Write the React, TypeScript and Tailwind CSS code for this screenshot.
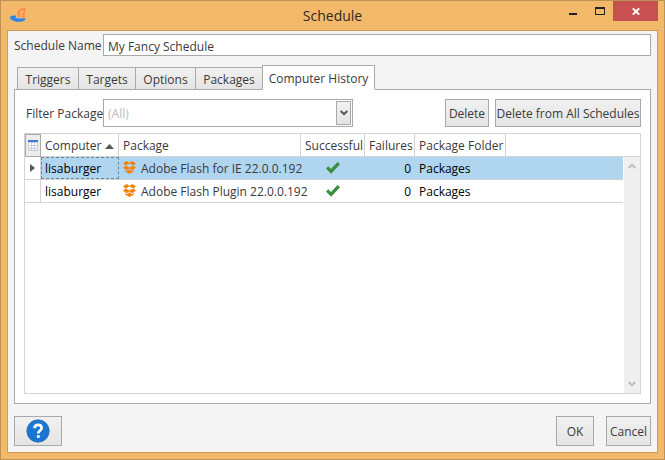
import React, { useState } from 'react';
import clsx from 'clsx';

const tabs = [
  { name: 'Triggers', width: 'w-[61px]' },
  { name: 'Targets', width: 'w-[57px]' },
  { name: 'Options', width: 'w-[60px]' },
  { name: 'Packages', width: 'w-[67px]' },
  { name: 'Computer History', width: 'w-[113px]' },
];

const history = [
  { computer: 'lisaburger', pkg: 'Adobe Flash for IE 22.0.0.192', failures: 0, folder: 'Packages' },
  { computer: 'lisaburger', pkg: 'Adobe Flash Plugin 22.0.0.192', failures: 0, folder: 'Packages' },
];

const buttonStyle = 'border border-[#a9a9a9] bg-linear-to-b from-[#f1f1f1] to-[#e4e4e4] text-center whitespace-nowrap';

const AppLogo = () => (
  <svg className="h-4 w-4" viewBox="0 0 16 16" aria-hidden="true">
    <path d="M0 10.4C0.2 8.6 2.6 8 5.4 8.6L6.4 10.6L12 11.6L15.6 11.2C15.6 13.6 12.6 14.9 9 14.7C4.2 14.5 0 12.8 0 10.4Z" fill="#2e86ea" />
    <path d="M5.4 10C6.6 11.6 9 12 11 11.2L8 9.8Z" fill="#b9c4cb" />
    <path d="M7.4 10C6.6 6.4 7.8 2 11.6 1.2L15.4 0.8C16 3.4 15.4 5 14.8 6.4L14.6 10.2L11.6 11.4L12.2 6.8L10.6 6.2L9.8 11Z" fill="#fb914f" />
    <path d="M10.2 5.4L12.8 3L12.8 6.4Z" fill="#f6c08a" />
  </svg>
);

const PackageIcon = () => (
  <svg className="h-[13px] w-[13px] shrink-0" viewBox="0 0 13 13" fill="#f5820b" aria-hidden="true">
    <path d="M3.8 0L6.5 1.9V2.4L2.7 4.6L0 2.3Z" />
    <path d="M9.2 0L6.5 1.9V2.4L10.3 4.6L13 2.3Z" />
    <path d="M0 6.8L2.6 4.4L6.5 6.6V7.4L3.8 9.3Z" />
    <path d="M13 6.8L10.4 4.4L6.5 6.6V7.4L9.2 9.3Z" />
    <path d="M2 9.1L3.9 10.2L6.5 8.2L9.1 10.2L11 9.1V10.6L6.5 13L2 10.6Z" />
  </svg>
);

const CheckIcon = () => (
  <svg className="mx-auto h-3 w-[14px]" viewBox="0 0 14 12" role="img" aria-label="Yes">
    <path d="M0 6.4L2.2 4.2L5 7L11.6 0L14 2.2L5.1 11.8Z" fill="#388e3c" />
  </svg>
);

const Chevron = ({ up = false }: { up?: boolean }) => (
  <svg className={clsx('h-[6px] w-2', up && 'rotate-180')} viewBox="0 0 8 6" aria-hidden="true">
    <path d="M0.7 1L4 4.2L7.3 1" fill="none" stroke="currentColor" strokeWidth="2" />
  </svg>
);

const TitleBar = () => (
  <header className="grid h-[29px] grid-cols-[1fr_auto_1fr] items-start">
    <div className="pt-[6px] pl-[9px]">
      <AppLogo />
    </div>
    <h1 className="pt-[5px] text-[14px] leading-5 text-[#2d2a26]">Schedule</h1>
    <div className="flex justify-end pr-[6px]">
      <button type="button" aria-label="Minimize" className="flex h-5 w-[28px] items-center justify-center">
        <svg className="h-[10px] w-[10px]" viewBox="0 0 10 10">
          <path d="M1 7H9V9H1Z" fill="#222" />
        </svg>
      </button>
      <button type="button" aria-label="Maximize" className="flex h-5 w-[26px] items-center justify-center">
        <svg className="h-2 w-[10px]" viewBox="0 0 10 8" shapeRendering="crispEdges">
          <path d="M0 0H10V8H0ZM1 2V7H9V2Z" fill="#222" fillRule="evenodd" />
        </svg>
      </button>
      <button type="button" aria-label="Close" className="flex h-5 w-[45px] items-center justify-center bg-[#c75050]">
        <svg className="h-[7px] w-2" viewBox="0 0 8 7">
          <path d="M0.8 0.4L7.2 6.6M7.2 0.4L0.8 6.6" stroke="#fff" strokeWidth="2" />
        </svg>
      </button>
    </div>
  </header>
);

const HistoryTable = () => {
  const [selected, setSelected] = useState(0);
  const headCell = 'border-r border-b border-[#d3d3d3] px-1 pt-[2px] pb-0 text-left font-normal';

  return (
    <div className="relative flex-1 border border-[#d3d3d3] bg-white">
      <table className="w-full table-fixed border-separate border-spacing-0 whitespace-nowrap">
        <colgroup>
          <col className="w-4" />
          <col className="w-[78px]" />
          <col className="w-[182px]" />
          <col className="w-16" />
          <col className="w-[50px]" />
          <col className="w-[91px]" />
          <col />
        </colgroup>
        <thead>
          <tr className="h-[23px]">
            <th className="border border-[#a9a9a9] bg-[#ececec] p-0">
              <button type="button" aria-label="Choose columns" className="flex w-full justify-center">
                <svg className="h-[11px] w-[10px]" viewBox="0 0 10 11" shapeRendering="crispEdges">
                  <path d="M0 0H10V11H0Z" fill="#c6cfda" />
                  <path d="M0 0H10V2H0Z" fill="#3f7fcf" />
                  <path d="M1 3H3V5H1ZM4 3H6V5H4ZM7 3H9V5H7ZM1 6H3V8H1ZM4 6H6V8H4ZM7 6H9V8H7ZM1 9H3V10H1ZM4 9H6V10H4ZM7 9H9V10H7Z" fill="#fff" />
                </svg>
              </button>
            </th>
            <th className={headCell} aria-sort="ascending">
              <span className="flex items-center justify-between">
                Computer
                <svg className="h-[5px] w-[9px]" viewBox="0 0 9 5">
                  <path d="M4.5 0L9 5H0Z" fill="#555" />
                </svg>
              </span>
            </th>
            <th className={headCell}>Package</th>
            <th className={headCell}>Successful</th>
            <th className={headCell}>Failures</th>
            <th className={headCell}>Package Folder</th>
            <td className="border-b border-[#d3d3d3]" />
          </tr>
        </thead>
        <tbody>
          {history.map((row, i) => {
            const cell = clsx('border-b border-[#d3d3d3] p-0', i === selected && 'bg-[#b0d5ef]');
            return (
              <tr key={row.pkg} className="h-[23px]" onClick={() => setSelected(i)}>
                <td className="border-r border-b border-[#d3d3d3] p-0">
                  {i === selected && (
                    <svg className="mx-auto h-2 w-[5px]" viewBox="0 0 5 8">
                      <path d="M0 0L5 4L0 8Z" fill="#555" />
                    </svg>
                  )}
                </td>
                <td className={cell}>
                  <div className={clsx('h-[22px] border border-dashed px-[3px] pt-px leading-5 text-black', i === selected ? 'border-[#6f8798]' : 'border-transparent')}>
                    {row.computer}
                  </div>
                </td>
                <td className={cell}>
                  <div className="flex h-[22px] gap-[5px] pt-1 pl-1">
                    <PackageIcon />
                    {row.pkg}
                  </div>
                </td>
                <td className={cell}><CheckIcon /></td>
                <td className={clsx(cell, 'text-black')}>
                  <div className="h-[22px] pt-1 pr-1 text-right">{row.failures}</div>
                </td>
                <td className={clsx(cell, 'text-black')}>
                  <div className="h-[22px] pt-1 pl-1">{row.folder}</div>
                </td>
                <td className={cell} />
              </tr>
            );
          })}
        </tbody>
      </table>
      <div className="absolute top-[23px] right-0 bottom-0 flex w-[17px] flex-col items-center justify-between border-l border-white bg-[#efefef] py-[6px] text-[#bdbdbd]">
        <Chevron up />
        <Chevron />
      </div>
    </div>
  );
};

const App = () => {
  const [name, setName] = useState('My Fancy Schedule');
  const [activeTab, setActiveTab] = useState('Computer History');

  return (
    <div className="flex min-h-screen flex-col border border-[#bd9254] bg-[#f3b96b] px-[6px] pb-[6px] font-['Open_Sans','Noto_Sans',sans-serif] text-[12px] leading-4 text-[#3a3a3a]">
      <div className="-mx-[6px]">
        <TitleBar />
      </div>

      <main className="flex flex-1 flex-col border border-[#cf9c58] bg-[#f4f4f4] px-[6px] pt-[3px] pb-[6px]">
        <div className="flex items-center">
          <label htmlFor="schedule-name" className="w-[89px] pt-[2px] whitespace-nowrap">Schedule Name</label>
          <input
            id="schedule-name"
            type="text"
            value={name}
            onChange={(e) => setName(e.target.value)}
            className="h-[22px] min-w-0 flex-1 border border-[#a9a9a9] bg-white px-1 pt-[2px] outline-none"
          />
        </div>

        <div role="tablist" className="relative z-10 mt-[9px] ml-[3px] flex h-[25px] items-end">
          {tabs.map((tab) => (
            <button
              key={tab.name}
              type="button"
              role="tab"
              aria-selected={tab.name === activeTab}
              onClick={() => setActiveTab(tab.name)}
              className={clsx(
                'border border-[#a9a9a9] pt-[2px] text-center whitespace-nowrap',
                tab.width,
                tab.name === activeTab
                  ? 'h-[25px] border-b-white bg-white'
                  : 'h-[23px] border-r-0 bg-linear-to-b from-[#f1f1f1] to-[#e4e4e4]'
              )}
            >
              {tab.name}
            </button>
          ))}
        </div>

        <section role="tabpanel" aria-label={activeTab} className="-mt-px flex flex-1 flex-col border border-[#a9a9a9] bg-white p-[9px]">
          <div className="mb-[6px] flex items-center">
            <label htmlFor="filter-package" className="w-[79px] pt-[2px] pl-[2px] whitespace-nowrap">Filter Package</label>
            <div className="relative w-[250px]">
              <select
                id="filter-package"
                className="block h-7 w-full appearance-none border border-[#a9a9a9] bg-white px-1 pt-[2px] text-[#bdbdbd] outline-none"
              >
                <option>(All)</option>
              </select>
              <span className="pointer-events-none absolute top-[2px] right-[2px] bottom-[2px] flex w-[15px] items-center justify-center border border-[#a9a9a9] bg-linear-to-b from-[#f1f1f1] to-[#e4e4e4] text-[#555]">
                <Chevron />
              </span>
            </div>
            <button type="button" className={clsx(buttonStyle, 'ml-auto h-7 w-11 pt-[2px]')}>Delete</button>
            <button type="button" className={clsx(buttonStyle, 'ml-[6px] h-7 w-[146px] pt-[2px]')}>Delete from All Schedules</button>
          </div>
          <HistoryTable />
        </section>

        <footer className="mt-3 flex">
          <button type="button" aria-label="Help" className={clsx(buttonStyle, 'flex h-[30px] w-12 items-center justify-center')}>
            <svg className="h-6 w-6" viewBox="0 0 24 24">
              <circle cx="12" cy="12" r="11.2" fill="#1976d2" stroke="#2f6fb5" strokeWidth="0.8" />
              <path d="M8.6 9.2C8.6 7 10 5.9 12.1 5.9C14.2 5.9 15.6 7.1 15.6 8.9C15.6 11.4 12.3 11.7 12.3 14.6" fill="none" stroke="#fff" strokeWidth="2.7" />
              <path d="M10.9 16.2H13.7V18.8H10.9Z" fill="#fff" />
            </svg>
          </button>
          <button type="button" className={clsx(buttonStyle, 'ml-auto h-[30px] w-[38px] pt-[2px]')}>OK</button>
          <button type="button" className={clsx(buttonStyle, 'ml-3 h-[30px] w-[45px] pt-[2px]')}>Cancel</button>
        </footer>
      </main>
    </div>
  );
};

export default App;
